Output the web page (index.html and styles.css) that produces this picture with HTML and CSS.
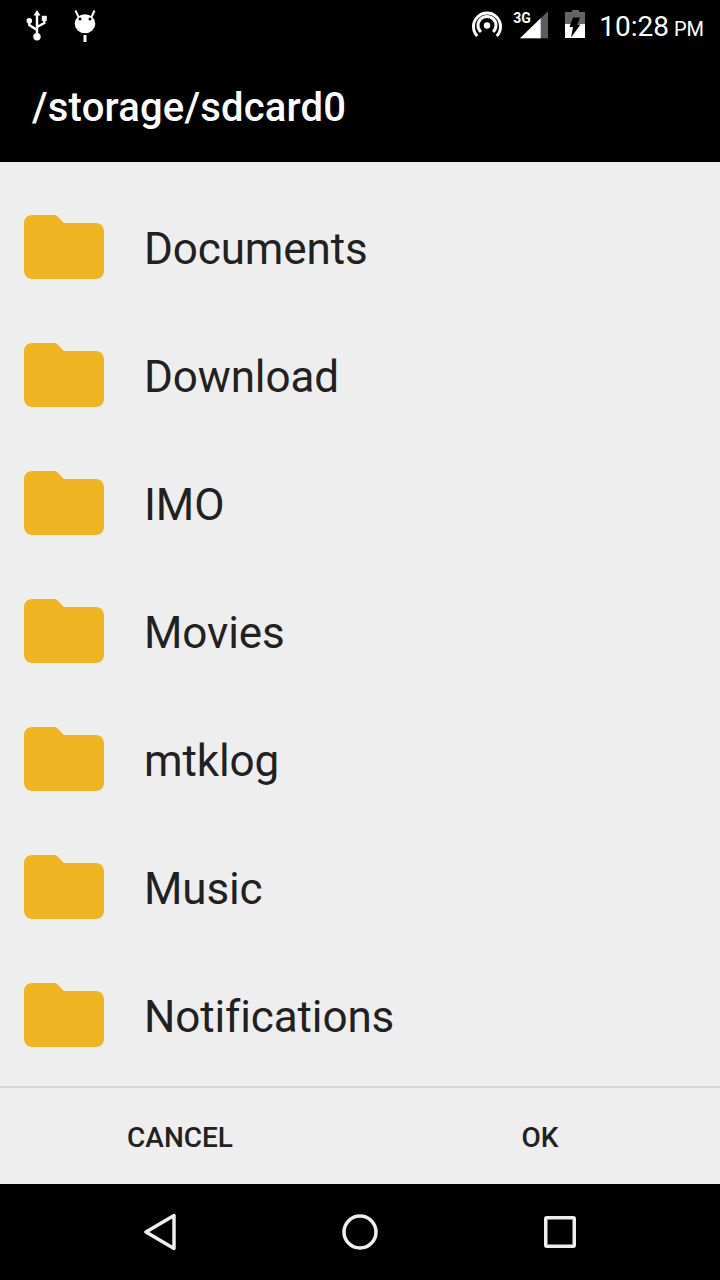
FILE: index.html
```html
<!DOCTYPE html>
<html lang="en">
<head>
  <meta charset="UTF-8" />
  <title>/storage/sdcard0</title>
  <link rel="stylesheet" href="styles.css">
</head>
<body>

  <div class="status-bar">
    <div class="status-left">
      <svg width="24" height="32" viewBox="0 0 24 32" fill="none" stroke="#fff" stroke-width="2.400">
        <path d="M12 4V27M4.300 12V16L12 21M19.300 11V14L12 18"/>
        <path d="M12 1L15.500 6.500H8.500Z" fill="#fff" stroke="none"/>
        <circle cx="4.300" cy="11.700" r="2.800" fill="#fff" stroke="none"/>
        <rect x="16.800" y="6.800" width="5" height="5" fill="#fff" stroke="none"/>
        <circle cx="12" cy="27.700" r="3.700" fill="#fff" stroke="none"/>
      </svg>
      <svg width="24" height="34" viewBox="0 0 24 34" fill="#fff">
        <ellipse cx="12" cy="15.700" rx="10.300" ry="9.500"/>
        <path d="M5.500 9L2.500 2.500M18.500 9L21.500 2.500" stroke="#fff" stroke-width="2"/>
        <circle cx="7" cy="11" r="1.500" fill="#000"/>
        <circle cx="17" cy="11" r="1.500" fill="#000"/>
        <rect x="10.500" y="27" width="3" height="7"/>
      </svg>
    </div>
    <div class="status-right">
      <svg width="30" height="30" viewBox="0 0 30 30" fill="none" stroke="#fff" stroke-width="3">
        <circle cx="15" cy="15.500" r="3.200" fill="#fff" stroke="none"/>
        <path d="M8.900 22A9 9 0 1 1 21.100 22"/>
        <path d="M5.300 26A13.500 13.500 0 1 1 24.700 26"/>
      </svg>
      <div class="signal">
        <span class="net-type">3G</span>
        <svg width="30" height="30" viewBox="0 0 30 30">
          <path d="M1 28.300L29 1.300V28.300Z" fill="#5c5c5c"/>
          <path d="M1 28.300L21.700 8.300V28.300Z" fill="#fff"/>
        </svg>
      </div>
      <svg class="battery" width="20" height="30" viewBox="0 0 20 30">
        <path d="M7 0H14V2H20V28H0V2H7Z" fill="#666"/>
        <path d="M0 14H20V28H0Z" fill="#fff"/>
        <path d="M8 7.500H15L12.500 14.500H15.500L6 27.500L8 17H4.500Z" fill="#000"/>
      </svg>
      <div class="clock">10:28<span class="ampm"> PM</span></div>
    </div>
  </div>

  <header class="toolbar">/storage/sdcard0</header>

  <ul class="folder-list">
    <li class="folder-row">
      <svg class="folder-icon" viewBox="0 0 24 24"><path d="M10 4H4c-1.100 0-2 .9-2 2v12c0 1.100.9 2 2 2h16c1.100 0 2-.9 2-2V8c0-1.100-.9-2-2-2h-8l-2-2z"/></svg>
      <span>Documents</span>
    </li>
    <li class="folder-row">
      <svg class="folder-icon" viewBox="0 0 24 24"><path d="M10 4H4c-1.100 0-2 .9-2 2v12c0 1.100.9 2 2 2h16c1.100 0 2-.9 2-2V8c0-1.100-.9-2-2-2h-8l-2-2z"/></svg>
      <span>Download</span>
    </li>
    <li class="folder-row">
      <svg class="folder-icon" viewBox="0 0 24 24"><path d="M10 4H4c-1.100 0-2 .9-2 2v12c0 1.100.9 2 2 2h16c1.100 0 2-.9 2-2V8c0-1.100-.9-2-2-2h-8l-2-2z"/></svg>
      <span>IMO</span>
    </li>
    <li class="folder-row">
      <svg class="folder-icon" viewBox="0 0 24 24"><path d="M10 4H4c-1.100 0-2 .9-2 2v12c0 1.100.9 2 2 2h16c1.100 0 2-.9 2-2V8c0-1.100-.9-2-2-2h-8l-2-2z"/></svg>
      <span>Movies</span>
    </li>
    <li class="folder-row">
      <svg class="folder-icon" viewBox="0 0 24 24"><path d="M10 4H4c-1.100 0-2 .9-2 2v12c0 1.100.9 2 2 2h16c1.100 0 2-.9 2-2V8c0-1.100-.9-2-2-2h-8l-2-2z"/></svg>
      <span>mtklog</span>
    </li>
    <li class="folder-row">
      <svg class="folder-icon" viewBox="0 0 24 24"><path d="M10 4H4c-1.100 0-2 .9-2 2v12c0 1.100.9 2 2 2h16c1.100 0 2-.9 2-2V8c0-1.100-.9-2-2-2h-8l-2-2z"/></svg>
      <span>Music</span>
    </li>
    <li class="folder-row">
      <svg class="folder-icon" viewBox="0 0 24 24"><path d="M10 4H4c-1.100 0-2 .9-2 2v12c0 1.100.9 2 2 2h16c1.100 0 2-.9 2-2V8c0-1.100-.9-2-2-2h-8l-2-2z"/></svg>
      <span>Notifications</span>
    </li>
  </ul>

  <div class="actions">
    <button>CANCEL</button>
    <button>OK</button>
  </div>

  <nav class="nav-bar">
    <div class="nav-cell">
      <svg width="32" height="38" viewBox="0 0 32 38" fill="none" stroke="#eee" stroke-width="3.500" stroke-linejoin="round">
        <path d="M2 19L30 2.500V35.500Z"/>
      </svg>
    </div>
    <div class="nav-cell">
      <svg width="36" height="36" viewBox="0 0 36 36" fill="none" stroke="#eee" stroke-width="3.500">
        <circle cx="18" cy="18" r="16"/>
      </svg>
    </div>
    <div class="nav-cell">
      <svg width="32" height="32" viewBox="0 0 32 32" fill="none" stroke="#eee" stroke-width="3.500" stroke-linejoin="round">
        <rect x="1.750" y="1.750" width="28.500" height="28.500" rx="1"/>
      </svg>
    </div>
  </nav>

</body>
</html>
```

FILE: styles.css
```css
* {
  box-sizing: border-box;
}
body {
  font-family: Roboto, sans-serif;
  margin: 0;
  width: 720px;
  height: 1280px;
  background: #eeeeee;
  overflow: hidden;
}

.status-bar {
  height: 50px;
  background: #000;
  display: flex;
  justify-content: space-between;
  align-items: center;
  padding: 0 16px 0 25px;
  color: #fff;
}

.status-left, .status-right {
  display: flex;
  align-items: center;
}

.status-left {
  gap: 23.5px;
}

.signal {
  position: relative;
  width: 30px;
  height: 30px;
  margin-left: 17.5px;
}

.net-type {
  position: absolute;
  left: -6px;
  top: 1px;
  font-size: 14px;
  font-weight: 700;
  line-height: 14px;
}

.signal svg {
  display: block;
}

.battery {
  margin-left: 16px;
}

.clock {
  font-size: 28px;
  margin-left: 14px;
  padding-top: 2px;
}

.ampm {
  font-size: 20px;
}

.toolbar {
  height: 112px;
  background: #000;
  color: #fff;
  font-size: 40px;
  font-weight: 500;
  letter-spacing: .2px;
  padding: 3px 32px 0;
  display: flex;
  align-items: center;
}

.folder-list {
  list-style: none;
  margin: 0;
  padding: 21px 0 0;
  height: 924px;
  overflow: hidden;
}

.folder-row {
  height: 128px;
  display: flex;
  align-items: center;
  padding-left: 16px;
  color: #212121;
  font-size: 44px;
  letter-spacing: -.12px;
  gap: 32px;
}

.folder-row span {
  padding-top: 4px;
}

.folder-icon {
  width: 96px;
  height: 96px;
  fill: #eeb422;
  flex: none;
}

.actions {
  height: 98px;
  border-top: 2px solid #d6d6d6;
  display: flex;
}

.actions button {
  flex: 1;
  border: none;
  background: none;
  font-family: inherit;
  font-size: 28px;
  font-weight: 500;
  color: #212121;
  padding: 2px 0 0;
}

.nav-bar {
  height: 96px;
  background: #000;
  display: flex;
  align-items: center;
  padding: 0 60px;
}

.nav-cell {
  flex: 1;
  display: flex;
  justify-content: center;
}
```
